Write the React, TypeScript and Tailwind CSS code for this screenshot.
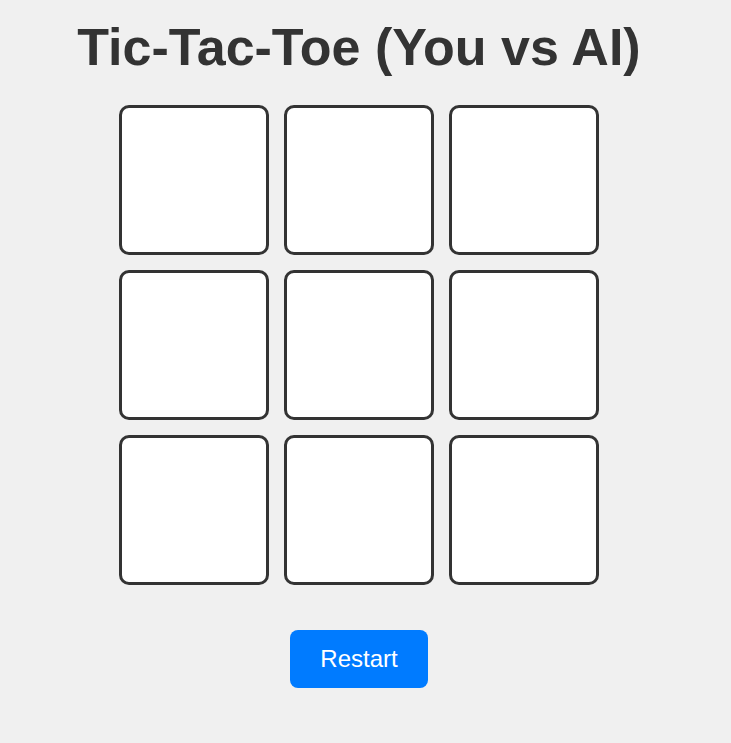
export default function App() {
  const cells = Array.from({ length: 9 }, (_, i) => i);

  return (
    <div className="min-h-screen bg-[#f0f0f0] font-['Liberation_Sans',Arial,sans-serif]">
      <div className="flex w-[718px] flex-col items-center pt-[18px]">
        <h1 className="text-[52px] font-bold leading-[58px] text-[#333]">Tic-Tac-Toe (You vs AI)</h1>
        <div className="mt-[29px] grid grid-cols-[repeat(3,150px)] gap-[15px]">
          {cells.map((i) => (
            <button
              key={i}
              className="size-[150px] rounded-[10px] border-[3px] border-[#333] bg-white"
              aria-label={`Cell ${i + 1}`}
            />
          ))}
        </div>
        <button className="mt-[45px] h-[58px] w-[138px] rounded-lg bg-[#007bff] text-[24px] text-white">
          Restart
        </button>
      </div>
    </div>
  );
}
